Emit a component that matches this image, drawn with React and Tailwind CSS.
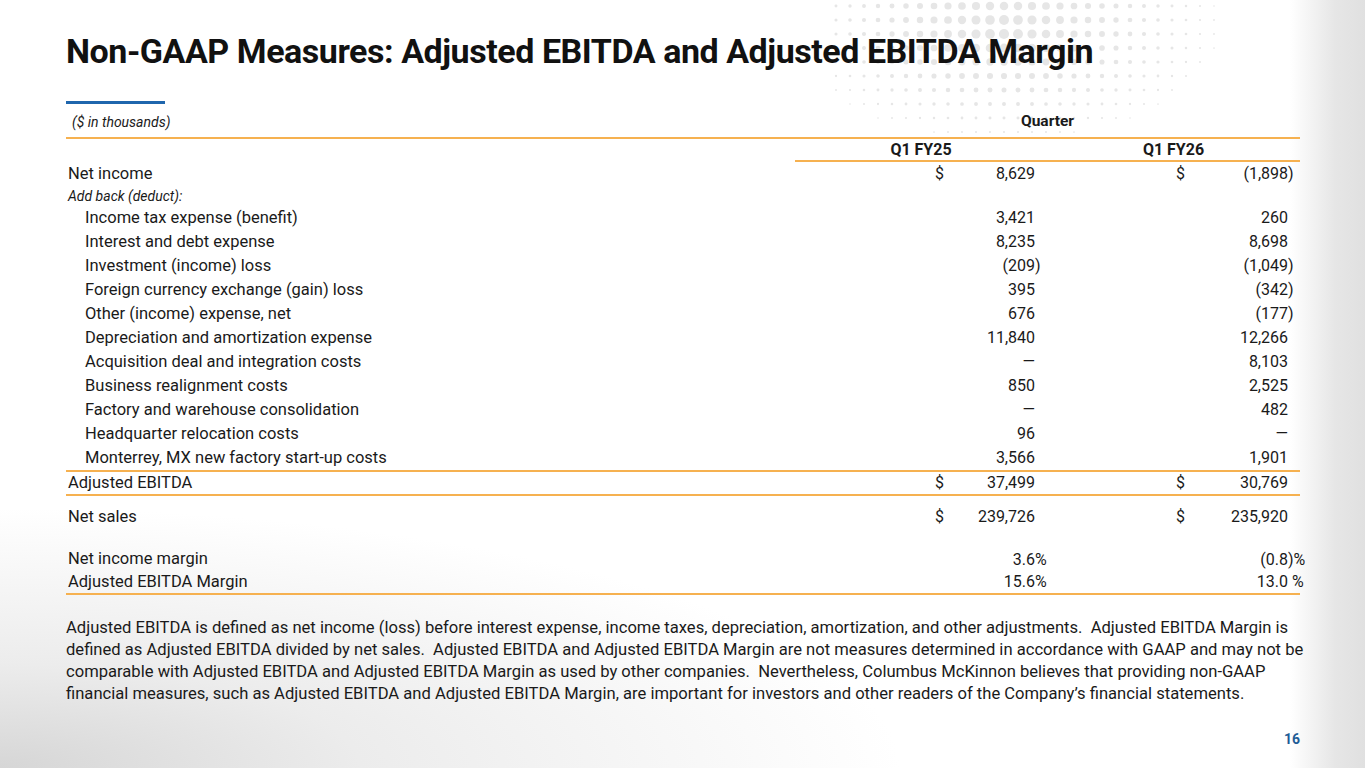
import React from 'react';

const items = [
  ['Income tax expense (benefit)', '3,421', '260'],
  ['Interest and debt expense', '8,235', '8,698'],
  ['Investment (income) loss', '(209)', '(1,049)'],
  ['Foreign currency exchange (gain) loss', '395', '(342)'],
  ['Other (income) expense, net', '676', '(177)'],
  ['Depreciation and amortization expense', '11,840', '12,266'],
  ['Acquisition deal and integration costs', '—', '8,103'],
  ['Business realignment costs', '850', '2,525'],
  ['Factory and warehouse consolidation', '—', '482'],
  ['Headquarter relocation costs', '96', '—'],
  ['Monterrey, MX new factory start-up costs', '3,566', '1,901'],
];

// split a figure into the right-aligned part and what hangs past the column edge
function split(v) {
  if (v.endsWith(')%')) return [v.slice(0, -2), ')%'];
  if (v.endsWith(' %')) return [v.slice(0, -2), ' %'];
  if (v.endsWith(')')) return [v.slice(0, -1), ')'];
  if (v.endsWith('%')) return [v.slice(0, -1), '%'];
  return [v, ''];
}

function Cell({ value, dollar, second }) {
  const [num, tail] = split(value);
  return (
    <div className={second ? 'flex w-[253px] text-[16px]' : 'flex w-[252px] text-[16px]'}>
      <span className={second ? 'w-[141px] pl-[129px]' : 'w-[152px] pl-[140px]'}>{dollar ? '$' : ''}</span>
      <span className="flex-1 text-right">{num}</span>
      <span className="w-[12px] whitespace-pre">{tail}</span>
    </div>
  );
}

function Row({ label, a, b, dollar, indent, h = 'h-[24px]' }) {
  return (
    <div className={`flex items-center ${h}`}>
      <div className={indent ? 'w-[729px] pl-[19px]' : 'w-[729px] pl-[2px]'}>{label}</div>
      <Cell value={a} dollar={dollar} />
      <Cell value={b} dollar={dollar} second />
    </div>
  );
}

function Dots() {
  const dots = [];
  for (let y = 6; y <= 132; y += 14) {
    for (let x = 836; x <= 1262; x += 14) {
      const dx = (x - 1005) / 215;
      const dy = (y - 28) / 112;
      const d = Math.sqrt(dx * dx + dy * dy);
      if (d >= 1) continue;
      const r = 0.8 + 4.6 * (1 - d) * (1 - d * 0.3);
      dots.push(<circle key={`${x}-${y}`} cx={x} cy={y} r={r} fill="#e6e6e6" />);
    }
  }
  return (
    <svg className="absolute left-0 top-0" width="1365" height="150">
      {dots}
    </svg>
  );
}

const Rule = ({ className = '' }) => <div className={`h-[2px] bg-[#f6b150] ${className}`} />;

export default function App() {
  return (
    <div className="relative w-[1365px] h-[768px] overflow-hidden bg-white text-[#1a1a1a] font-['Roboto',sans-serif]">
      {/* backdrop shading */}
      <div className="absolute inset-0 bg-[radial-gradient(ellipse_900px_260px_at_0%_100%,#d6d6d6_0%,#ececec_40%,rgba(255,255,255,0)_100%)]" />
      <div className="absolute right-0 top-0 h-full w-[75px] bg-[linear-gradient(to_right,rgba(255,255,255,0),#e6e6e6_60%,#e0e0e0)]" />
      <Dots />

      <div className="relative flex flex-col pl-[66px] pt-[31px] w-[1300px]">
        <h1 className="h-[40px] leading-[40px] text-[34px] font-bold text-[#111] tracking-[-0.45px]">
          Non-GAAP Measures: Adjusted EBITDA and Adjusted EBITDA Margin
        </h1>
        <div className="mt-[30px] h-[3px] w-[99px] bg-[#1f66ad]" />

        <div className="flex h-[33px] items-center pt-[3px] text-[14px]">
          <div className="w-[729px] pl-[6px] italic">($ in thousands)</div>
          <div className="flex-1 text-center font-bold text-[15.5px]">Quarter</div>
        </div>
        <Rule />

        <div className="text-[16.5px]">
          <div className="flex h-[21px] items-center font-bold text-[16px]">
            <div className="w-[729px]" />
            <div className="w-[252px] text-center">Q1 FY25</div>
            <div className="w-[253px] text-center">Q1 FY26</div>
          </div>
          <Rule className="ml-[729px]" />

          <Row label="Net income" a="8,629" b="(1,898)" dollar />
          <div className="flex h-[20px] items-center pl-[2px] text-[14px] italic">Add back (deduct):</div>
          {items.map(([label, a, b]) => (
            <Row key={label} label={label} a={a} b={b} indent />
          ))}
          <Rule />
          <Row label="Adjusted EBITDA" a="37,499" b="30,769" dollar h="h-[22px]" />
          <Rule />
          <Row label="Net sales" a="239,726" b="235,920" dollar h="h-[42px]" />
          <div className="h-[10px]" />
          <Row label="Net income margin" a="3.6%" b="(0.8)%" h="h-[23px]" />
          <Row label="Adjusted EBITDA Margin" a="15.6%" b="13.0 %" h="h-[22px]" />
          <Rule />
        </div>

        <p className="mt-[22px] text-[16.6px] leading-[22px] whitespace-nowrap">
          Adjusted EBITDA is defined as net income (loss) before interest expense, income taxes, depreciation, amortization, and other adjustments.&nbsp; Adjusted EBITDA Margin is
          <br />
          defined as Adjusted EBITDA divided by net sales.&nbsp; Adjusted EBITDA and Adjusted EBITDA Margin are not measures determined in accordance with GAAP and may not be
          <br />
          comparable with Adjusted EBITDA and Adjusted EBITDA Margin as used by other companies.&nbsp; Nevertheless, Columbus McKinnon believes that providing non-GAAP
          <br />
          financial measures, such as Adjusted EBITDA and Adjusted EBITDA Margin, are important for investors and other readers of the Company’s financial statements.
        </p>

        <div className="mt-[24px] self-end text-[14px] font-bold leading-[20px] text-[#1f5c96]">16</div>
      </div>
    </div>
  );
}
